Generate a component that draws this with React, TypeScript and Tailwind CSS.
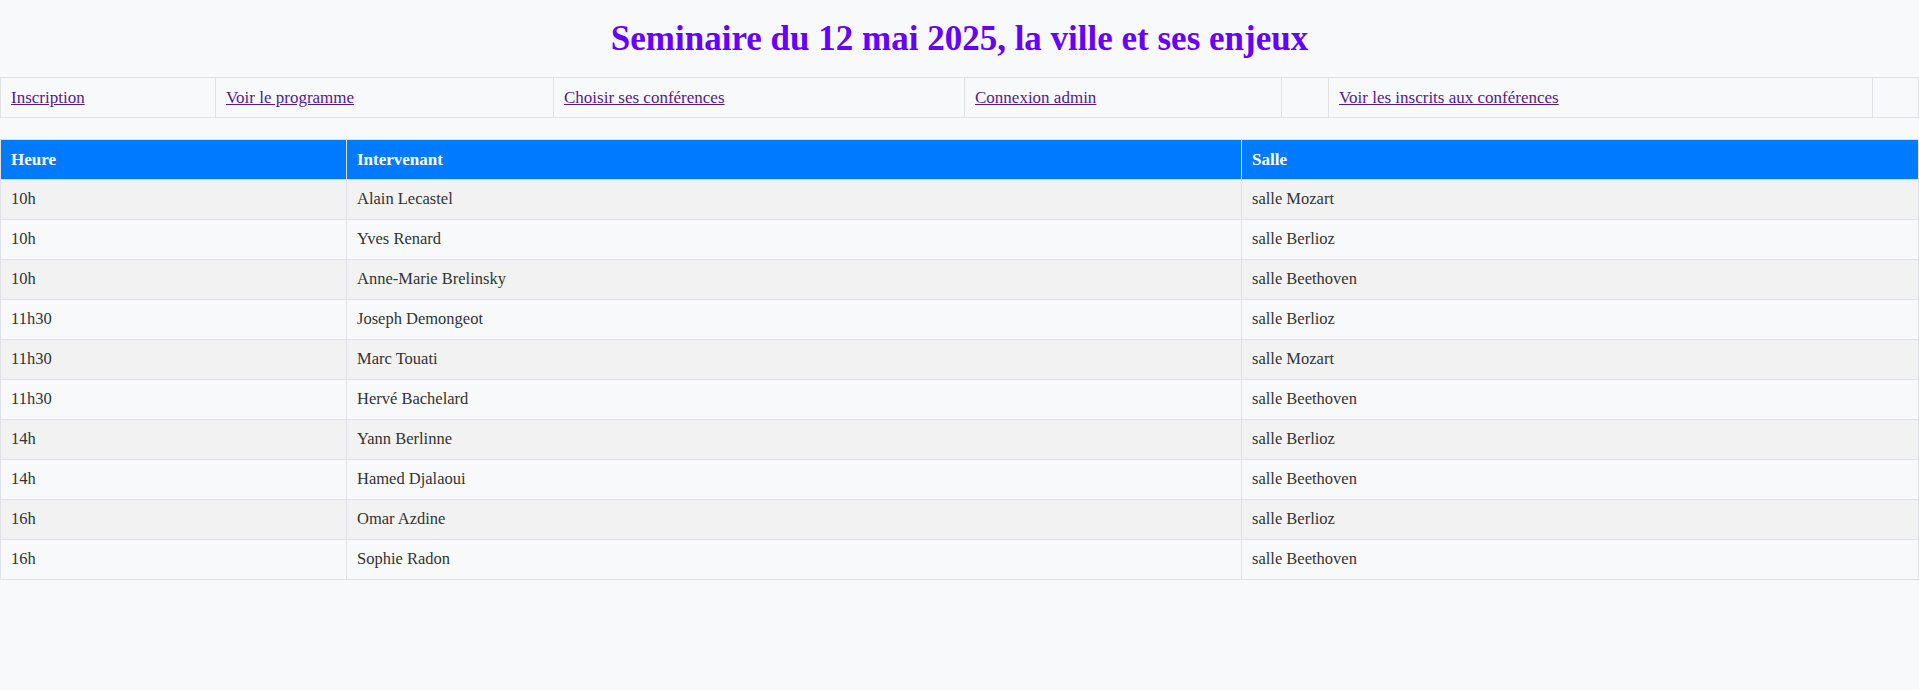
const links = [
  { label: "Inscription", w: "w-[215px]" },
  { label: "Voir le programme", w: "w-[338px]" },
  { label: "Choisir ses conférences", w: "w-[411px]" },
  { label: "Connexion admin", w: "w-[317px]" },
  { label: "", w: "w-[47px]" },
  { label: "Voir les inscrits aux conférences", w: "w-[544px]" },
  { label: "", w: "" },
];

const sessions = [
  ["10h", "Alain Lecastel", "salle Mozart"],
  ["10h", "Yves Renard", "salle Berlioz"],
  ["10h", "Anne-Marie Brelinsky", "salle Beethoven"],
  ["11h30", "Joseph Demongeot", "salle Berlioz"],
  ["11h30", "Marc Touati", "salle Mozart"],
  ["11h30", "Hervé Bachelard", "salle Beethoven"],
  ["14h", "Yann Berlinne", "salle Berlioz"],
  ["14h", "Hamed Djalaoui", "salle Beethoven"],
  ["16h", "Omar Azdine", "salle Berlioz"],
  ["16h", "Sophie Radon", "salle Beethoven"],
];

export default function App() {
  return (
    <div className="min-h-[690px] bg-[#f8f9fa] font-['Liberation_Serif',serif] text-[16px] text-[#333]">
      <header className="flex h-[77px] items-center justify-center">
        <h1 className="text-[35px] font-bold leading-none text-[#6600ff]">
          Seminaire du 12 mai 2025, la ville et ses enjeux
        </h1>
      </header>

      <table className="w-full table-fixed border-collapse">
        <tbody>
          <tr>
            {links.map((l, i) => (
              <td
                key={i}
                className={`${l.w} h-10 border border-[#dee2e6] px-[10px] leading-[19px]`}
              >
                {l.label && (
                  <a href="#" className="text-[17px] text-[#551a8b] underline">
                    {l.label}
                  </a>
                )}
              </td>
            ))}
          </tr>
        </tbody>
      </table>

      <table className="mt-[21px] w-full table-fixed border-collapse">
        <thead>
          <tr className="bg-[#007bff] text-left text-white">
            <th className="h-10 w-[346px] border border-[#dee2e6] px-[10px] text-[17px] font-bold">Heure</th>
            <th className="h-10 w-[895px] border border-[#dee2e6] px-[10px] text-[17px] font-bold">Intervenant</th>
            <th className="h-10 border border-[#dee2e6] px-[10px] text-[17px] font-bold">Salle</th>
          </tr>
        </thead>
        <tbody>
          {sessions.map((s, i) => (
            <tr key={i} className={i % 2 === 0 ? "bg-[#f2f2f2]" : "bg-[#f8f9fa]"}>
              {s.map((c, j) => (
                <td key={j} className="h-10 border border-[#dee2e6] px-[10px] text-[16.5px]">
                  {c}
                </td>
              ))}
            </tr>
          ))}
        </tbody>
      </table>
    </div>
  );
}
